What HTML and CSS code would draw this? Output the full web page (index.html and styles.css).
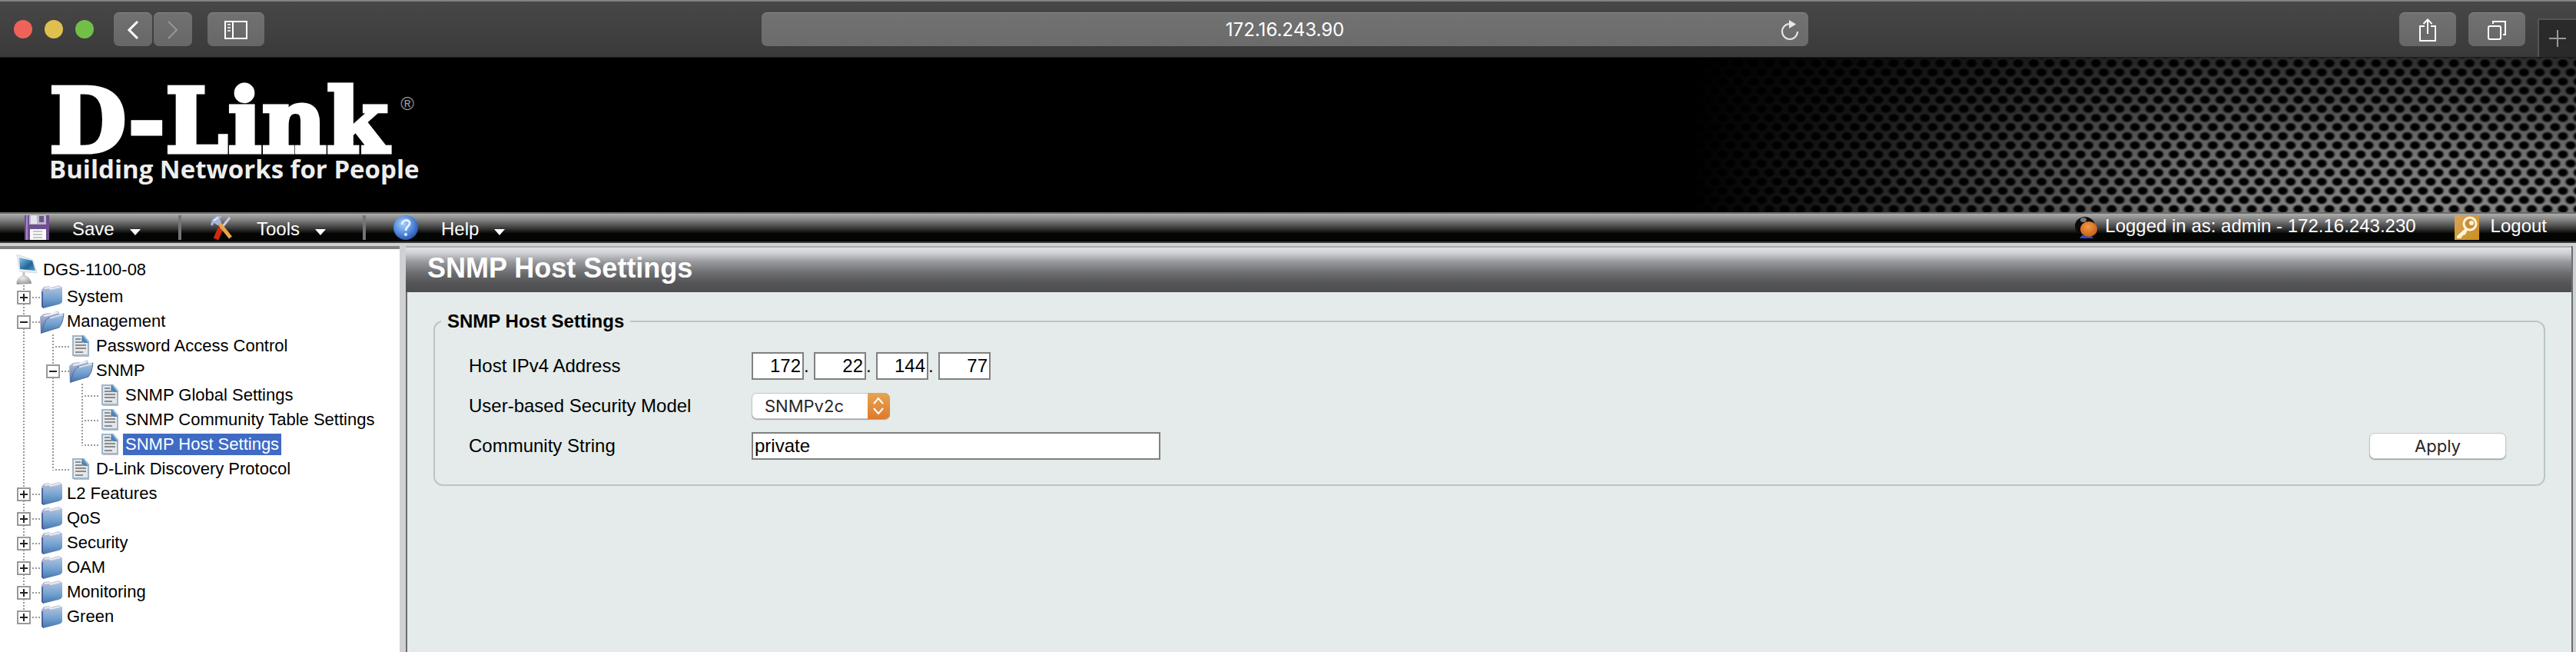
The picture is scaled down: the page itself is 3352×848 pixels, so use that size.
FILE: index.html
```html
<!DOCTYPE html>
<html lang="en">
<head>
<meta charset="utf-8">
<title>SNMP Host Settings</title>
<link rel="stylesheet" href="styles.css">
</head>
<body>
<svg class="defs" aria-hidden="true">
  <defs>
    <linearGradient id="gFolder" x1="0" y1="0" x2="0" y2="1"><stop offset="0" stop-color="#a9bfe0"/><stop offset=".55" stop-color="#6f9fcd"/><stop offset="1" stop-color="#4673ad"/></linearGradient>
    <linearGradient id="gBack" x1="0" y1="0" x2="0" y2="1"><stop offset="0" stop-color="#c3c9dc"/><stop offset="1" stop-color="#4d68a6"/></linearGradient>
    <linearGradient id="gScreen" x1="0" y1="0" x2="1" y2="1"><stop offset="0" stop-color="#8ec3e2"/><stop offset=".6" stop-color="#1f6699"/><stop offset="1" stop-color="#4f9dc8"/></linearGradient>
    <radialGradient id="gBase" cx=".4" cy=".3" r=".8"><stop offset="0" stop-color="#eeeeee"/><stop offset="1" stop-color="#8d8d8d"/></radialGradient>
    <radialGradient id="gHelp" cx=".4" cy=".35" r=".7"><stop offset="0" stop-color="#a9d0f8"/><stop offset=".6" stop-color="#4f86dc"/><stop offset="1" stop-color="#2450a8"/></radialGradient>
    <linearGradient id="gKey" x1="0" y1="0" x2="1" y2="1"><stop offset="0" stop-color="#d9a45c"/><stop offset="1" stop-color="#c98f1c"/></linearGradient>
    <radialGradient id="gFace" cx=".45" cy=".35" r=".7"><stop offset="0" stop-color="#f59a45"/><stop offset="1" stop-color="#bf5a14"/></radialGradient>
    <symbol id="folder" viewBox="0 0 34 32">
      <path d="M4 6 7 2l7-1 2 2 11-3 4 3v18L6 29 4 27Z" fill="url(#gBack)"/>
      <path d="M8 4l6-1 2 2 12-3" stroke="#e7ebf5" stroke-width="2" fill="none"/>
      <path d="M6 11C8 8 11 8 14 8L27 4c3 0 4 1 4 4v12c0 3-2 4-5 5L6 30Z" fill="url(#gFolder)"/>
      <path d="M5 8v20l2 1" stroke="#3c5596" stroke-width="1.5" fill="none"/>
    </symbol>
    <symbol id="folder-open" viewBox="0 0 34 32">
      <path d="M2 9 7 5l8-1 2 1 8-4 2 3v18L3 31Z" fill="url(#gBack)"/>
      <path d="M7 8l9-2 9-3" stroke="#eef1f8" stroke-width="2" fill="none"/>
      <path d="M4 30C7 20 8 12 15 9.500L33 5c-1 8-2 13-6 18Z" fill="url(#gFolder)" stroke="#54699e" stroke-width="1"/>
      <path d="M15 10.500 32 6" stroke="#d9e4f3" stroke-width="2"/>
    </symbol>
    <symbol id="doc" viewBox="0 0 34 32">
      <path d="M8 3h14l6 7v19H8Z" fill="#b7bec6"/>
      <path d="M7 2h14l6 7v18H7Z" fill="#e4e7e9" stroke="#9fb6cb" stroke-width="2"/>
      <path d="M19 1l8 10h-6l-3-3Z" fill="#4a86ba"/>
      <path d="M10 6h7M10 10h10M10 14h14M10 18h14M10 23h10" stroke="#8b8b8b" stroke-width="2"/>
    </symbol>
    <symbol id="computer" viewBox="0 0 28 41">
      <path d="M10 23v9" stroke="#c4c4c4" stroke-width="3"/>
      <path d="M1 1 22 8l5 17-22-2Z" fill="#e9f0f5" stroke="#cfdbe3"/>
      <path d="M4 5 21 9l4 13-20-2Z" fill="url(#gScreen)"/>
      <path d="M1 40c-2-6 4-12 9-12s10 6 10 11Z" fill="url(#gBase)"/>
    </symbol>
    <symbol id="plus" viewBox="0 0 38 32" overflow="visible">
      <path d="M19 0v32M30 16h10" class="dots"/>
      <path d="M11 8h16v16H11Z" fill="#fff" stroke="#999" stroke-width="2"/><path d="M14 16h10M19 11v10" stroke="#222" stroke-width="2"/>
    </symbol>
    <symbol id="plus-last" viewBox="0 0 38 32" overflow="visible">
      <path d="M19 0v8M30 16h10" class="dots"/>
      <path d="M11 8h16v16H11Z" fill="#fff" stroke="#999" stroke-width="2"/><path d="M14 16h10M19 11v10" stroke="#222" stroke-width="2"/>
    </symbol>
    <symbol id="minus" viewBox="0 0 38 32" overflow="visible">
      <path d="M19 0v32M30 16h10" class="dots"/>
      <path d="M11 8h16v16H11Z" fill="#fff" stroke="#999" stroke-width="2"/><path d="M14 16h10" stroke="#222" stroke-width="2"/>
    </symbol>
    <symbol id="line" viewBox="0 0 38 32"><path d="M19 0v32" class="dots"/></symbol>
    <symbol id="tee" viewBox="0 0 38 32" overflow="visible"><path d="M19 0v32M22 16h18" class="dots"/></symbol>
    <symbol id="elbow" viewBox="0 0 38 32" overflow="visible"><path d="M19 0v17M22 16h18" class="dots"/></symbol>
  </defs>
</svg>

<header class="browser">
  <div class="browser-left">
    <span class="light red"></span><span class="light yellow"></span><span class="light green"></span>
    <div class="nav-pair">
      <button class="tool narrow" aria-label="Back"><svg width="16" height="26" viewBox="0 0 16 26"><path d="M14 2 3 13l11 11" fill="none" stroke="#fff" stroke-width="3"/></svg></button>
      <button class="tool narrow" aria-label="Forward"><svg width="16" height="26" viewBox="0 0 16 26"><path d="M2 2l11 11L2 24" fill="none" stroke="#969696" stroke-width="2"/></svg></button>
    </div>
    <button class="tool" aria-label="Show sidebar"><svg width="30" height="24" viewBox="0 0 30 24"><path d="M1 1h28v22H1ZM11 1v22" fill="none" stroke="#fff" stroke-width="2"/><path d="M4 5h4M4 9h4M4 13h4" stroke="#ddd" stroke-width="2"/></svg></button>
  </div>
  <div class="address">
    <span class="address-text">172.16.243.90</span>
    <button class="reload" aria-label="Reload"><svg width="24" height="28" viewBox="0 0 24 28"><path d="M12 6A10 10 0 1 0 22 16" fill="none" stroke="#e8e8e8" stroke-width="2"/><path d="M11 1l9 5.500-9 5.500Z" fill="#e8e8e8"/></svg></button>
  </div>
  <div class="browser-right">
    <button class="tool" aria-label="Share"><svg width="24" height="32" viewBox="0 0 24 32"><path d="M8 11H2v19h20V11h-6M12 21V3M6.500 8 12 2.500 17.500 8" fill="none" stroke="#fff" stroke-width="2"/></svg></button>
    <button class="tool" aria-label="Show all tabs"><svg width="26" height="26" viewBox="0 0 26 26"><rect x="2" y="8" width="16" height="17" rx="2" fill="none" stroke="#fff" stroke-width="2"/><path d="M8 5V2h16v17h-3" fill="none" stroke="#fff" stroke-width="2"/></svg></button>
    <button class="new-tab" aria-label="New tab"><svg width="22" height="22" viewBox="0 0 22 22"><path d="M11 0v22M0 11h22" stroke="#999" stroke-width="2"/></svg></button>
  </div>
</header>

<div class="masthead">
  <div class="logo">
    <div class="wordmark"><span>D-Link</span><span class="reg">®</span></div>
    <div class="tagline">Building Networks for People</div>
  </div>
  <svg class="mesh" width="1152" height="201" viewBox="0 0 1152 201" aria-hidden="true">
    <defs>
      <radialGradient id="hole"><stop offset="0" stop-color="#000"/><stop offset=".55" stop-color="#000"/><stop offset="1" stop-color="#000" stop-opacity="0"/></radialGradient>
      <pattern id="holes" x="11.100" y="-4.500" width="20.250" height="23.700" patternUnits="userSpaceOnUse">
        <ellipse cx="10.100" cy="11.850" rx="8.300" ry="6.500" fill="url(#hole)"/>
        <ellipse cx="0" cy="0" rx="8.300" ry="6.500" fill="url(#hole)"/><ellipse cx="20.250" cy="0" rx="8.300" ry="6.500" fill="url(#hole)"/>
        <ellipse cx="0" cy="23.700" rx="8.300" ry="6.500" fill="url(#hole)"/><ellipse cx="20.250" cy="23.700" rx="8.300" ry="6.500" fill="url(#hole)"/>
      </pattern>
      <linearGradient id="metal"><stop offset="0" stop-color="#000"/><stop offset=".15" stop-color="#1a1a1a"/><stop offset=".35" stop-color="#444"/><stop offset=".55" stop-color="#777"/><stop offset=".85" stop-color="#868686"/><stop offset="1" stop-color="#7c7c7c"/></linearGradient>
      <linearGradient id="shade" x1="0" y1="0" x2="0" y2="1"><stop offset="0" stop-color="#000" stop-opacity=".66"/><stop offset=".65" stop-color="#000" stop-opacity=".1"/><stop offset="1" stop-color="#000" stop-opacity="0"/></linearGradient>
    </defs>
    <rect width="1152" height="201" fill="url(#metal)"/>
    <rect width="1152" height="201" fill="url(#shade)"/>
    <rect width="1152" height="201" fill="url(#holes)"/>
  </svg>
</div>

<nav class="menubar">
  <ul class="menu">
    <li><button class="menu-item">
      <svg width="32" height="32" viewBox="0 0 32 32"><path d="M0 0h32v32H0Z" fill="#6d5091"/><path d="M2 0h2v32H2Z" fill="#a48bc0"/><path d="M6 0h22v12H6Z" fill="#bdb6cc"/><path d="M8 0h8v11H8Z" fill="#e4e1ea"/><path d="M19 1h6v8h-6Z" fill="#6b5687"/><path d="M7 18h21v14H7Z" fill="#fafafa"/><path d="M11 21h12M11 25h12M11 29h12" stroke="#c4c4c4" stroke-width="2"/></svg>
      <span>Save</span><i class="caret"></i></button></li>
    <li><button class="menu-item">
      <svg width="32" height="32" viewBox="0 0 32 32"><path d="M27 3 15 18" stroke="#c9cfe0" stroke-width="3"/><path d="M15 17 9 31" stroke="#d2290f" stroke-width="7"/><path d="M12 9 28 29" stroke="#e9a545" stroke-width="5"/><path d="M2 12 4 6l6-5h7l-3 3 2 6-5 3-4-3-3 4Z" fill="#a9b4dc"/><path d="M6 7l6-4" stroke="#eef0fa" stroke-width="2"/></svg>
      <span>Tools</span><i class="caret"></i></button></li>
    <li><button class="menu-item">
      <svg width="32" height="32" viewBox="0 0 32 32"><circle cx="16" cy="16" r="16" fill="url(#gHelp)"/><path d="M11 12c0-7 11-7 10-1-1 4-5 4-5 9" fill="none" stroke="#e6f1ff" stroke-width="3"/><circle cx="16" cy="25" r="2" fill="#e6f1ff"/></svg>
      <span>Help</span><i class="caret"></i></button></li>
  </ul>
  <div class="session">
    <svg width="32" height="32" viewBox="0 0 32 32"><path d="M7 30h18l-3-4H10Z" fill="#2f49c4"/><ellipse cx="14" cy="14" rx="13" ry="12" fill="#0b0b0b"/><ellipse cx="12" cy="6" rx="4" ry="3" fill="#777"/><ellipse cx="19" cy="18" rx="11" ry="10" fill="url(#gFace)"/></svg>
    <span class="who">Logged in as: admin - 172.16.243.230</span>
    <a class="logout" href="#logout">
      <svg width="32" height="32" viewBox="0 0 32 32"><path d="M0 0h32v32H0Z" fill="url(#gKey)"/><circle cx="20" cy="11" r="8" fill="#c98d3a" stroke="#fff3dc" stroke-width="3"/><path d="M14 17 3 27v3h5l3-4 3-1 3-6" fill="#fff3dc"/><circle cx="22" cy="10" r="3" fill="#fff3dc"/></svg>
      <span>Logout</span></a>
  </div>
</nav>

<div class="workspace">
  <aside class="sidebar">
    <a class="root" href="#device"><svg width="28" height="41"><use href="#computer"/></svg><span>DGS-1100-08</span></a>
    <ul class="tree">
      <li><svg class="cell"><use href="#plus"/></svg><svg class="ico"><use href="#folder"/></svg><a href="#system">System</a></li>
      <li><svg class="cell"><use href="#minus"/></svg><svg class="ico"><use href="#folder-open"/></svg><a href="#management">Management</a></li>
      <li><svg class="cell"><use href="#line"/></svg><svg class="cell"><use href="#tee"/></svg><svg class="ico"><use href="#doc"/></svg><a href="#password">Password Access Control</a></li>
      <li><svg class="cell"><use href="#line"/></svg><svg class="cell"><use href="#minus"/></svg><svg class="ico"><use href="#folder-open"/></svg><a href="#snmp">SNMP</a></li>
      <li><svg class="cell"><use href="#line"/></svg><svg class="cell"><use href="#line"/></svg><svg class="cell"><use href="#tee"/></svg><svg class="ico"><use href="#doc"/></svg><a href="#global">SNMP Global Settings</a></li>
      <li><svg class="cell"><use href="#line"/></svg><svg class="cell"><use href="#line"/></svg><svg class="cell"><use href="#tee"/></svg><svg class="ico"><use href="#doc"/></svg><a href="#community">SNMP Community Table Settings</a></li>
      <li><svg class="cell"><use href="#line"/></svg><svg class="cell"><use href="#line"/></svg><svg class="cell"><use href="#elbow"/></svg><svg class="ico"><use href="#doc"/></svg><a class="selected" href="#host">SNMP Host Settings</a></li>
      <li><svg class="cell"><use href="#line"/></svg><svg class="cell"><use href="#elbow"/></svg><svg class="ico"><use href="#doc"/></svg><a href="#ddp">D-Link Discovery Protocol</a></li>
      <li><svg class="cell"><use href="#plus"/></svg><svg class="ico"><use href="#folder"/></svg><a href="#l2">L2 Features</a></li>
      <li><svg class="cell"><use href="#plus"/></svg><svg class="ico"><use href="#folder"/></svg><a href="#qos">QoS</a></li>
      <li><svg class="cell"><use href="#plus"/></svg><svg class="ico"><use href="#folder"/></svg><a href="#security">Security</a></li>
      <li><svg class="cell"><use href="#plus"/></svg><svg class="ico"><use href="#folder"/></svg><a href="#oam">OAM</a></li>
      <li><svg class="cell"><use href="#plus"/></svg><svg class="ico"><use href="#folder"/></svg><a href="#monitoring">Monitoring</a></li>
      <li><svg class="cell"><use href="#plus-last"/></svg><svg class="ico"><use href="#folder"/></svg><a href="#green">Green</a></li>
    </ul>
  </aside>

  <main class="content">
    <h1 class="banner">SNMP Host Settings</h1>
    <form class="panel">
      <fieldset class="group">
        <legend>SNMP Host Settings</legend>
        <div class="fields">
          <label for="ip1">Host IPv4 Address</label>
          <div class="ip">
            <input id="ip1" class="box octet" value="172"><span class="dot">.</span>
            <input class="box octet" value="22" aria-label="Second octet"><span class="dot">.</span>
            <input class="box octet" value="144" aria-label="Third octet"><span class="dot">.</span>
            <input class="box octet" value="77" aria-label="Fourth octet">
          </div>
          <label for="model">User-based Security Model</label>
          <div class="select-wrap">
            <select id="model"><option>SNMPv2c</option></select>
            <svg class="stepper" viewBox="0 0 29 34" aria-hidden="true"><path d="M8 14l6-7 6 7M8 20l6 7 6-7" fill="none" stroke="#fff" stroke-width="2"/></svg>
          </div>
          <label for="comm">Community String</label>
          <input id="comm" class="box wide" value="private">
        </div>
        <button class="apply" type="button">Apply</button>
      </fieldset>
    </form>
  </main>
</div>
</body>
</html>
```

FILE: styles.css
```css
* { box-sizing: border-box; }

body {
  margin: 0;
  min-height: 100vh;
  display: flex;
  flex-direction: column;
  background: #d0d1d3;
  font-family: "Liberation Sans", Arial, sans-serif;
  font-size: 24px;
  color: #000;
}

svg { display: block; flex: none; }
button { border: 0; padding: 0; font: inherit; color: inherit; background: none; }
ul { list-style: none; margin: 0; padding: 0; }
a { color: inherit; text-decoration: none; }

.defs { position: absolute; width: 0; height: 0; }
.dots { fill: none; stroke: #999; stroke-width: 2; stroke-dasharray: 2 2; }

/* Browser toolbar */
.browser {
  display: grid;
  grid-template-columns: 991fr 1362fr 999fr;
  align-items: center;
  height: 75px;
  border-top: 2px solid #828282;
  border-bottom: 1px solid #1c1c1c;
  background: linear-gradient(#474747, #3a3a3a);
}
.browser-left { display: flex; align-items: center; gap: 16px; padding-left: 18px; }
.light { width: 24px; height: 24px; border-radius: 50%; }
.red { background: #ee6359; }
.yellow { background: #e0c04c; }
.green { background: #72bf48; }
.nav-pair { display: flex; gap: 2px; margin: 0 4px 0 10px; }
.tool {
  display: flex;
  align-items: center;
  justify-content: center;
  width: 74px;
  height: 44px;
  border-radius: 7px;
  border-top: 1px solid #858585;
  background: linear-gradient(#717171, #676767);
}
.narrow { width: 50px; }
.address {
  display: grid;
  grid-template-columns: 48px 1fr 48px;
  align-items: center;
  height: 44px;
  border-radius: 7px;
  border-top: 1px solid #8c8c8c;
  background: linear-gradient(#727272, #6b6b6b);
}
.address-text {
  grid-column: 2;
  text-align: center;
  font-family: Inter, sans-serif;
  font-size: 24px;
  color: #fff;
}
.reload { display: flex; justify-content: center; }
.browser-right { display: flex; align-items: center; justify-content: flex-end; gap: 16px; height: 100%; }
.new-tab {
  display: flex;
  align-items: center;
  justify-content: center;
  align-self: flex-end;
  width: 50px;
  height: 50px;
  border-top: 2px solid #555;
  border-left: 2px solid #555;
  background: #2a2a2a;
}

/* Masthead */
.masthead { display: flex; justify-content: space-between; height: 201px; overflow: hidden; background: #000; color: #fff; }
.logo { padding: 46px 0 0 64px; }
.wordmark { display: flex; height: 80px; }
.wordmark span:first-child {
  font: bold 116px/72px "DejaVu Serif", serif;
  -webkit-text-stroke: 5px #fff;
}
.wordmark .reg { margin-left: 16px; font: 24px/28px "Liberation Sans", sans-serif; color: #999; }
.tagline { font: 700 33px/38px "Open Sans", sans-serif; color: #eee; }

/* Menu bar */
.menubar {
  display: flex;
  justify-content: space-between;
  height: 40px;
  padding: 2px 38px 2px 32px;
  border-top: 2px solid #6a6a6a;
  border-bottom: 2px solid #3a3a3a;
  background: linear-gradient(#adafac, #7d7d7d 24%, #404040 50%, #030502 72%);
  color: #fff;
}
.menu { display: flex; }
.menu li { display: flex; }
.menu li + li::before { content: ""; width: 4px; height: 32px; margin-right: 36px; background: #777375; }
.menu-item { display: flex; align-items: center; width: 200px; height: 32px; }
.menu-item span { margin: 4px 20px 0 30px; }
.caret { margin-top: 12px; border: 7px solid transparent; border-top: 8px solid #fff; border-bottom: 0; }
.session, .logout { display: flex; line-height: 28px; }
.who { margin: 0 50px 0 8px; }
.logout span { margin-left: 15px; }

/* Navigation tree */
.workspace { display: flex; flex: 1; padding-top: 4px; }
.sidebar { flex: 0 0 520px; border-top: 4px solid #7f817f; background: #fff; font-size: 22px; padding: 6px 0 8px; }
.root { display: flex; padding-left: 21px; height: 41px; }
.root span { padding-left: 7px; line-height: 41px; }
.tree { padding-left: 12px; }
.tree li { display: flex; height: 32px; }
.cell { width: 38px; height: 32px; overflow: visible; }
.ico { width: 34px; height: 32px; }
.tree a { height: 28px; line-height: 28px; margin-top: 1px; padding: 0 3px; }
.tree .selected { background: #3f6bc4; color: #fff; }

/* Settings page */
.content { flex: 1; display: flex; flex-direction: column; margin: 0 4px 0 8px; border-right: 2px solid #6c6c6e; background: #e4ebea; }
.banner {
  margin: 0;
  height: 60px;
  padding: 0 28px;
  font-size: 36px;
  line-height: 54px;
  color: #fff;
  border-top: 2px solid #abacb0;
  background: linear-gradient(#e2e3e7, #d0d1d5 12%, #97999c 32%, #6b6c6f 58%, #545456 80%, #4e4e50);
}
.panel { flex: 1; padding: 24px 34px; border-left: 2px solid #6c6c6e; }
.group {
  display: flex;
  align-items: flex-end;
  justify-content: space-between;
  margin: 0;
  padding: 26px 49px 32px 44px;
  border: 2px solid #b9c5c8;
  border-radius: 12px;
}
.group legend { margin-left: -36px; padding: 0 8px; font-weight: bold; line-height: 28px; }
.fields { display: grid; grid-template-columns: 368px auto; grid-auto-rows: 36px; row-gap: 16px; align-items: center; }
.box {
  height: 36px;
  border: 2px solid #808080;
  padding: 0 2px;
  background: #fff;
  font: 24px "Liberation Sans", Arial, sans-serif;
  color: #000;
}
.ip { display: flex; align-items: center; }
.octet { width: 68px; text-align: right; }
.dot { width: 13px; }
.wide { width: 532px; }
.select-wrap { position: relative; width: 180px; height: 34px; }
.select-wrap select {
  appearance: none;
  width: 100%;
  height: 100%;
  border: 1px solid #c3c6c6;
  border-radius: 7px;
  padding: 0 16px;
  background: #fff;
  box-shadow: 0 1px 1px #9a9fa0;
  font: 22px Inter, sans-serif;
  color: #262626;
}
.stepper {
  position: absolute;
  top: 0;
  right: 0;
  width: 29px;
  height: 34px;
  border-radius: 0 7px 7px 0;
  background: linear-gradient(#e6a552, #de7a2c);
  pointer-events: none;
}
.apply {
  width: 178px;
  height: 34px;
  margin-bottom: 1px;
  border: 1px solid #c3c6c6;
  border-radius: 7px;
  background: #fff;
  box-shadow: 0 1px 1px #9a9fa0;
  font: 22px Inter, sans-serif;
  color: #262626;
}
```
